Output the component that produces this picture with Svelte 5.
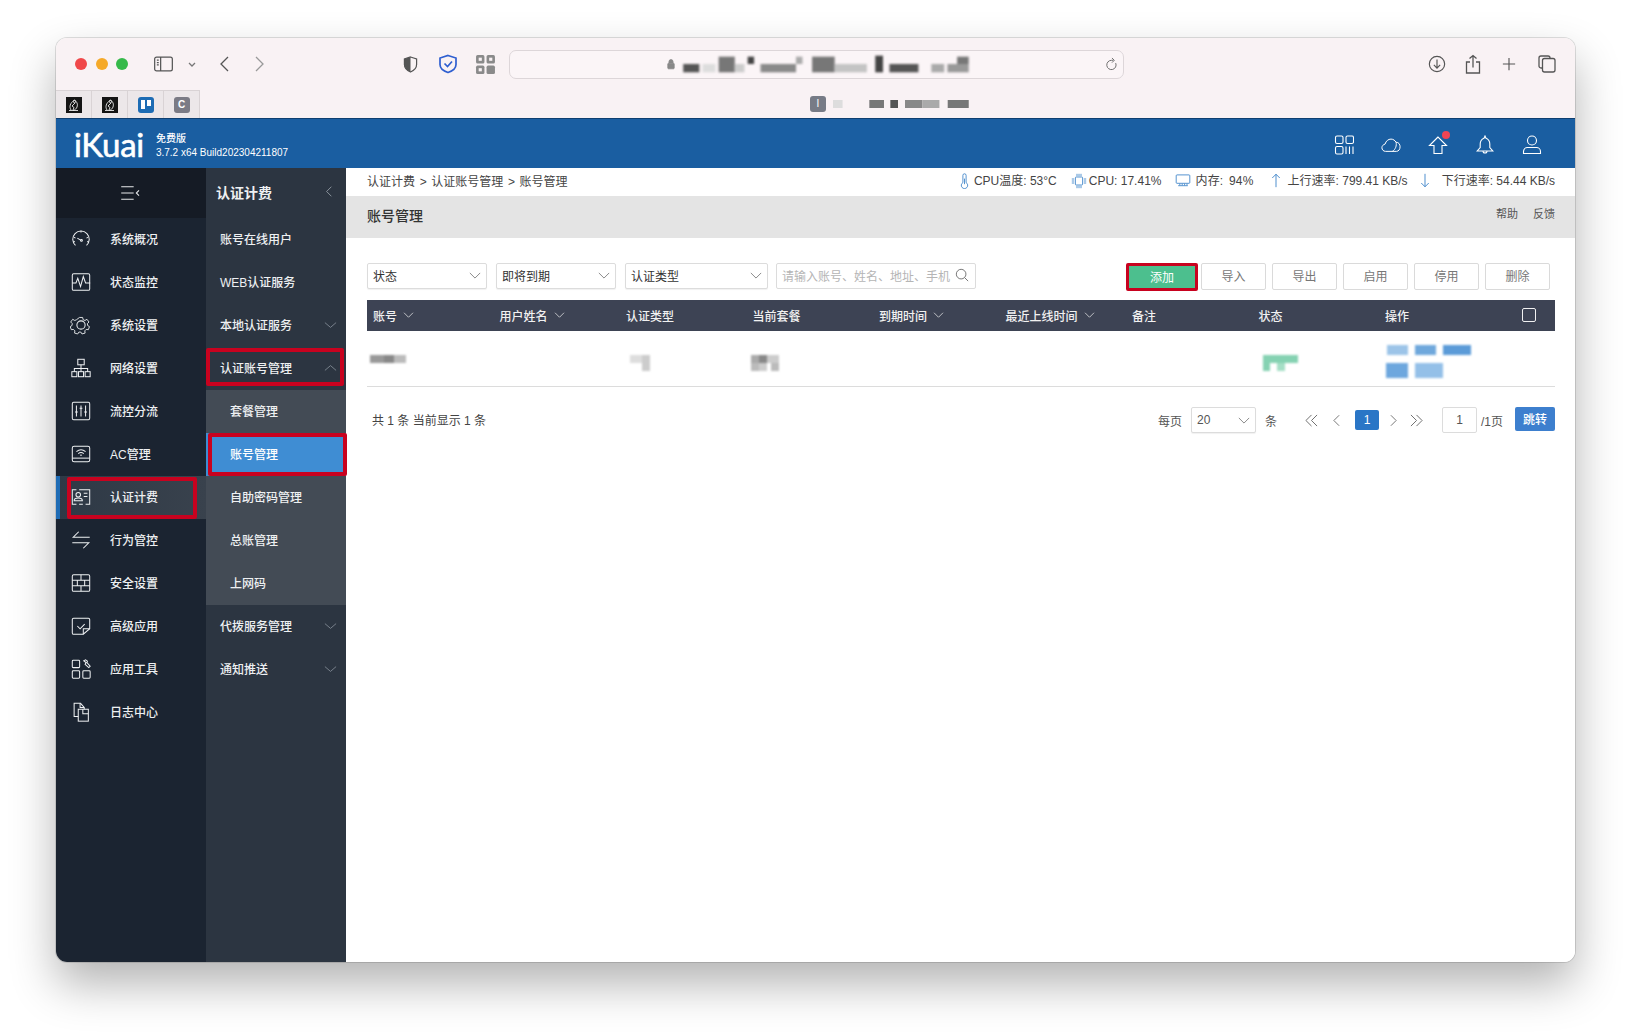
<script lang="ts">
	const icons: Record<string, string> = {
		gauge: '<path d="M6 19a9 9 0 1 1 12 0"/><path d="M12 3v2M4 10l2 1M20 10l-2 1M3.500 15h2M18.500 15h2"/><path d="M8 11l4 2.500"/><circle cx="12.500" cy="13.500" r="1"/>',
		pulse: '<rect x="2.500" y="3" width="19" height="18" rx="1.500"/><path d="M2.500 13h4l2-5 3 9 3-11 2.500 7h5"/>',
		gear: '<circle cx="12" cy="12" r="4.500"/><path d="M10 2.500h4l.6 2.800 2.300 1 2.500-1.500 2.600 3.400-2 2 .3 2.400 2.300 1.400-1.400 3.800-2.800-.3-1.700 1.800.4 2.800-3.900 1.100-1.500-2.400h-2.400l-1.500 2.400-3.900-1.100.4-2.800-1.700-1.800-2.800.3-1.400-3.800 2.300-1.400.3-2.400-2-2 2.600-3.400 2.500 1.500 2.300-1z" transform="translate(1.600 1.600) scale(.87)"/>',
		network: '<rect x="8.500" y="2.500" width="7" height="6"/><rect x="2" y="16" width="5.500" height="5.500"/><rect x="9.250" y="16" width="5.500" height="5.500"/><rect x="16.500" y="16" width="5.500" height="5.500"/><path d="M12 8.500V16M4.750 16v-3.500h14.500V16"/>',
		sliders: '<rect x="2.500" y="2.500" width="19" height="19" rx="1.500"/><path d="M7 6v12M12 6v12M17 6v12"/><path d="M5.500 13h3M10.500 9h3M15.500 13h3"/>',
		wifi: '<rect x="2.500" y="3.500" width="19" height="17" rx="2"/><path d="M2.500 16.500h19"/><path d="M7 9.500c3-2.500 7-2.500 10 0M9 11.500c2-1.500 4-1.500 6 0M11 13.500c.6-.5 1.400-.5 2 0"/>',
		card: '<path d="M7 4H2.500v16H7M10 20h4M17 20h4.500V4H10"/><circle cx="9" cy="9.500" r="2.500"/><path d="M4.500 16c0-2 2-3 4.500-3s4.500 1 4.500 3z"/><path d="M15 8h4M15 11.500h4"/>',
		swap: '<path d="M21.500 9H3.500l6-6"/><path d="M2.500 15h18l-6 6"/>',
		wall: '<rect x="2.500" y="3" width="19" height="18" rx="1.500"/><path d="M2.500 9h19M2.500 15h19M8 9v6M16 9v6M12 3v6M12 15v6"/>',
		check: '<path d="M14.500 21H4a1.500 1.500 0 0 1-1.500-1.500V5A1.500 1.500 0 0 1 4 3.500h16A1.500 1.500 0 0 1 21.500 5v10l-7 6z"/><path d="M14.500 21v-6h7M8 12l3 3 5-5"/>',
		tools: '<rect x="2.500" y="2.500" width="8" height="8" rx="1"/><rect x="2.500" y="14" width="8" height="8" rx="1"/><rect x="14" y="14" width="8" height="8" rx="1"/><path d="M15 3l2.500 2-1 2 4 3.500 1.500-1.500-3.500-4 .5-1.500-2-1.500z"/>',
		files: '<path d="M9 17H4.500V2.500h7l4 4.500V9"/><path d="M11 2.500V7h4.500"/><rect x="9" y="9" width="11" height="13"/><path d="M14 9v5h6"/>'
	};

	const mainMenu = [
		{ label: '系统概况', icon: 'gauge' },
		{ label: '状态监控', icon: 'pulse' },
		{ label: '系统设置', icon: 'gear' },
		{ label: '网络设置', icon: 'network' },
		{ label: '流控分流', icon: 'sliders' },
		{ label: 'AC管理', icon: 'wifi' },
		{ label: '认证计费', icon: 'card', active: true },
		{ label: '行为管控', icon: 'swap' },
		{ label: '安全设置', icon: 'wall' },
		{ label: '高级应用', icon: 'check' },
		{ label: '应用工具', icon: 'tools' },
		{ label: '日志中心', icon: 'files' }
	];

	const subTop = [
		{ label: '账号在线用户' },
		{ label: 'WEB认证服务' },
		{ label: '本地认证服务', arrow: true }
	];
	const subChildren = ['套餐管理', '账号管理', '自助密码管理', '总账管理', '上网码'];
	const subBottom = ['代拨服务管理', '通知推送'];

	const columns = [
		{ label: '账号', sort: true },
		{ label: '用户姓名', sort: true },
		{ label: '认证类型' },
		{ label: '当前套餐' },
		{ label: '到期时间', sort: true },
		{ label: '最近上线时间', sort: true },
		{ label: '备注' },
		{ label: '状态' },
		{ label: '操作' }
	];

	const actions = ['导入', '导出', '启用', '停用', '删除'];

	// blurred parts of the screenshot: x, y, w, h, colour
	const urlBlur = [
		[135, 130, 25, 25, '#555'], [165, 130, 20, 25, '#ddd'], [190, 108, 25, 47, '#777'],
		[215, 130, 15, 25, '#ccc'], [235, 108, 10, 22, '#444'], [255, 130, 55, 25, '#8a8a8a'],
		[310, 108, 10, 22, '#aaa'], [335, 108, 35, 47, '#777'], [370, 130, 50, 25, '#c4c4c4'],
		[433, 105, 12, 50, '#444'], [455, 130, 45, 25, '#555'], [520, 130, 20, 25, '#aaa'],
		[545, 130, 33, 25, '#999'], [560, 108, 18, 22, '#777']
	];
	const tabBlur = [
		[365, 245, 15, 25, '#ddd'], [422, 245, 23, 25, '#777'], [455, 245, 12, 25, '#555'],
		[478, 245, 27, 25, '#888'], [505, 245, 27, 25, '#aaa'], [545, 245, 33, 25, '#777']
	];
	const cellBlur = [
		{ w: 36, h: 9, rects: [[0, 0, 14, 8, '#999'], [14, 0, 10, 8, '#888'], [24, 0, 12, 8, '#bbb']] },
		null,
		{ w: 20, h: 16, rects: [[0, 0, 12, 8, '#ddd'], [12, 0, 8, 8, '#ccc'], [12, 8, 8, 8, '#ccc']] },
		{ w: 28, h: 16, rects: [[0, 0, 8, 8, '#aaa'], [8, 0, 8, 8, '#888'], [16, 0, 12, 8, '#ccc'], [0, 8, 8, 8, '#bbb'], [8, 8, 8, 8, '#ccc'], [20, 8, 8, 8, '#bbb']] },
		null,
		null,
		null,
		{ w: 35, h: 16, rects: [[0, 0, 35, 8, '#85d2b2'], [0, 8, 7, 8, '#85d2b2'], [14, 8, 8, 8, '#a5dfc6']] },
		{ w: 88, h: 33, rects: [[4, 0, 21, 10, '#9cc4e8'], [32, 0, 21, 10, '#6fa8dc'], [60, 0, 28, 10, '#5b9bd8'], [3, 18, 22, 15, '#6da7de'], [32, 18, 28, 15, '#94c0e8']] }
	];
</script>

{#snippet darkFavicon()}
	<svg class="fav-dark" viewBox="0 0 16 16">
		<rect width="16" height="16" fill="#141414" stroke="none"/>
		<path d="M5 13c-2-3-1-7 3-9.500M8 3c3 1.500 4 4 3 7-.5 1.500-2 3-4 3.500M9 6L6 9l2 1.500-1 2.500M3 13.500h9"/>
		<circle cx="8.500" cy="4.500" r="1.200"/>
	</svg>
{/snippet}

<div class="page">
	<div class="window">
		<div class="chrome">
			<div class="toolbar-row">
				<div class="lights"><i class="red"></i><i class="yellow"></i><i class="green"></i></div>
				<svg class="tb sidebar-btn" viewBox="0 0 20 16"><rect x=".7" y=".7" width="18.600" height="14.600" rx="2"/><path d="M7 .7v14.600"/><path d="M3 4h2M3 6.500h2M3 9h2" /></svg>
				<svg class="tb drop" viewBox="0 0 8 5"><path d="M1 1l3 3 3-3"/></svg>
				<svg class="tb back" viewBox="0 0 10 16"><path d="M9 1L2 8l7 7"/></svg>
				<svg class="tb forward" viewBox="0 0 10 16"><path d="M1 1l7 7-7 7"/></svg>
				<svg class="tb shield" viewBox="0 0 16 18"><path d="M8 1l6.500 2v6c0 4-3 6.500-6.500 8-3.500-1.500-6.500-4-6.500-8V3z"/><path class="fill" d="M8 1v16c-3.500-1.500-6.500-4-6.500-8V3z"/></svg>
				<svg class="tb bitwarden" viewBox="0 0 20 20"><path d="M10 1.500l8 2.500v6.500c0 4-3.500 6.500-8 8-4.500-1.500-8-4-8-8V4z"/><path d="M6.500 9.500l3 3 4.500-5"/></svg>
				<svg class="tb qr" viewBox="0 0 20 20"><rect x="1" y="1" width="8" height="8" rx="1.500"/><rect x="11" y="1" width="8" height="8" rx="1.500"/><rect x="1" y="11" width="8" height="8" rx="1.500"/><rect x="11" y="11" width="8" height="8" rx="1.500"/><rect class="hole" x="3.500" y="3.500" width="3" height="3"/><rect class="hole" x="13.500" y="3.500" width="3" height="3"/><rect class="hole" x="3.500" y="13.500" width="3" height="3"/></svg>
				<div class="urlbar">
					<svg class="lock" viewBox="0 0 10 14"><path d="M2.500 6V4a2.500 2.500 0 0 1 5 0v2"/><rect x="1" y="6" width="8" height="7" rx="1"/></svg>
					<svg class="url-blur" viewBox="130 100 450 60" preserveAspectRatio="none">
						{#each urlBlur as r}<rect x={r[0]} y={r[1]} width={r[2]} height={r[3]} fill={r[4]}/>{/each}
					</svg>
					<svg class="reload" viewBox="0 0 14 16"><path d="M11.500 6.500A5 5 0 1 1 7 3.500h2"/><path d="M7.500 1l2.500 2.500L7.500 6"/></svg>
				</div>
				<svg class="tb download" viewBox="0 0 20 20"><circle cx="10" cy="10" r="8.500"/><path d="M10 5v9.500M6.500 11l3.500 3.500 3.500-3.500"/></svg>
				<svg class="tb share" viewBox="0 0 16 20"><path d="M5 7.500H1.500v11h13v-11H11"/><path d="M8 13V1M4.500 4L8 1l3.500 3"/></svg>
				<svg class="tb plus" viewBox="0 0 16 16"><path d="M8 1v14M1 8h14"/></svg>
				<svg class="tb copy" viewBox="0 0 18 18"><rect x="4.500" y="3.500" width="12.500" height="13.500" rx="2"/><path d="M4 13H3a2 2 0 0 1-2-2V3a2 2 0 0 1 2-2h7a2 2 0 0 1 2 2v.5"/></svg>
			</div>
			<div class="tabs-row">
				<div class="fav">{@render darkFavicon()}</div>
				<div class="fav">{@render darkFavicon()}</div>
				<div class="fav"><span class="trello"><i></i><i></i></span></div>
				<div class="fav"><span class="grey-c">C</span></div>
				<div class="tab-title">
					<span class="tab-badge">I</span>
					<svg class="tab-blur" viewBox="365 245 215 25" preserveAspectRatio="none">
						{#each tabBlur as r}<rect x={r[0]} y={r[1]} width={r[2]} height={r[3]} fill={r[4]}/>{/each}
					</svg>
				</div>
			</div>
		</div>

		<header class="topbar">
			<div class="logo">iKuai</div>
			<div class="version">
				<div>免费版</div>
				<div>3.7.2 x64 Build202304211807</div>
			</div>
			<div class="top-icons">
				<svg viewBox="0 0 20 20"><rect x="1.500" y="1" width="7.500" height="7.500" rx="1.500"/><rect x="12" y="1" width="7.500" height="7.500" rx="1.500"/><rect x="1.500" y="11.500" width="7.500" height="7.500" rx="1.500"/><path d="M12 11.500V19M15.500 11.500V19M19 11.500V19"/></svg>
				<svg viewBox="0 0 22 16"><path d="M5 15C2.500 15 1 13 1 11s1.500-3.500 3.500-4C5.500 3.500 8 1.500 11 1.500c2.500 0 4.500 1.500 5.500 3.500 3-.3 4.500 2.500 4.500 5 0 2.500-1.500 5-4 5z"/><path d="M16.500 5c1 3.500-.5 8-4 10"/></svg>
				<span class="home">
					<svg viewBox="0 0 20 20"><path d="M10 2L1.500 10.500H6v8h8v-8h4.500z"/></svg>
					<i class="dot"></i>
				</span>
				<svg viewBox="0 0 20 20"><path d="M10 1l1 2.200c2.500 1 3.800 3 3.800 5.800v3.500l3 3.500H2.200l3-3.500V9c0-2.800 1.300-4.800 3.800-5.800z"/><path d="M8 16a2 2 0 0 0 4 0"/></svg>
				<svg viewBox="0 0 20 20"><circle cx="10" cy="5.500" r="4.500"/><path d="M1.500 18.500v-2c0-2.500 2-4 4-4h9c2 0 4 1.500 4 4v2z"/></svg>
			</div>
		</header>

		<div class="body">
			<nav class="main-nav">
				<div class="main-head">
					<svg viewBox="0 0 24 18"><path d="M1 2h14M1 9h14M1 16h14M21 6l-3 3 3 3"/></svg>
				</div>
				{#each mainMenu as item}
					<div class="main-item" class:active={item.active}>
						<svg class="nav-icon" viewBox="0 0 24 24">{@html icons[item.icon]}</svg>
						<span>{item.label}</span>
						{#if item.active}<i class="mark mark-main"></i>{/if}
					</div>
				{/each}
			</nav>

			<nav class="sub-nav">
				<div class="sub-head">
					<span>认证计费</span>
					<svg class="chev" viewBox="0 0 10 16"><path d="M8 2L2 8l6 6"/></svg>
				</div>
				{#each subTop as item}
					<div class="sub-item">
						<span>{item.label}</span>
						{#if item.arrow}<svg class="chev-wide" viewBox="0 0 16 10"><path d="M1 2l7 6 7-6"/></svg>{/if}
					</div>
				{/each}
				<div class="sub-item open">
					<span>认证账号管理</span>
					<svg class="chev-wide" viewBox="0 0 16 10"><path d="M1 8l7-6 7 6"/></svg>
					<i class="mark mark-open"></i>
				</div>
				<div class="sub-children">
					{#each subChildren as child, i}
						<div class="sub-child" class:current={i === 1}>
							<span>{child}</span>
							{#if i === 1}<i class="mark mark-current"></i>{/if}
						</div>
					{/each}
				</div>
				{#each subBottom as label}
					<div class="sub-item">
						<span>{label}</span>
						<svg class="chev-wide" viewBox="0 0 16 10"><path d="M1 2l7 6 7-6"/></svg>
					</div>
				{/each}
			</nav>

			<main class="content">
				<div class="crumbs">
					<span class="trail">认证计费 &gt; 认证账号管理 &gt; 账号管理</span>
					<div class="stats">
						<span class="stat">
							<svg class="st thermo" viewBox="0 0 10 20"><path d="M3 12V3a2 2 0 0 1 4 0v9a4 4 0 1 1-4 0z"/><path d="M5 7v7"/></svg>CPU温度: 53°C
						</span>
						<span class="stat">
							<svg class="st chip" viewBox="0 0 20 20"><rect x="5.500" y="5" width="9" height="10" rx="1"/><path d="M1 7.500h3M1 10h3M1 12.500h3M16 7.500h3M16 10h3M16 12.500h3M7.500 1v3M10 1v3M12.500 1v3M7.500 16v3M10 16v3M12.500 16v3"/></svg>CPU: 17.41%
						</span>
						<span class="stat mem">
							<svg class="st monitor" viewBox="0 0 20 16"><rect x="1.500" y="1" width="17" height="10.500" rx="1"/><path d="M4 14.500h12M6 12v2M9 12v2M12 12v2M15 12v2"/></svg>内存: 94%
						</span>
						<span class="stat">
							<svg class="st arrow up" viewBox="0 0 12 18"><path d="M6 17V1.500M1.500 6L6 1.500 10.500 6"/></svg>上行速率: 799.41 KB/s
						</span>
						<span class="stat">
							<svg class="st arrow dn" viewBox="0 0 12 18"><path d="M6 1v15.500M1.500 12L6 16.500 10.500 12"/></svg><span class="down">下行速率: 54.44 KB/s</span>
						</span>
					</div>
				</div>

				<div class="title-bar">
					<h1>账号管理</h1>
					<div class="title-links"><span>帮助</span><span>反馈</span></div>
				</div>

				<div class="panel">
					<div class="filters">
						<div class="select s1">状态<svg viewBox="0 0 14 8"><path d="M1 1l6 6 6-6"/></svg></div>
						<div class="select s2">即将到期<svg viewBox="0 0 14 8"><path d="M1 1l6 6 6-6"/></svg></div>
						<div class="select s3">认证类型<svg viewBox="0 0 14 8"><path d="M1 1l6 6 6-6"/></svg></div>
						<div class="search">
							<span>请输入账号、姓名、地址、手机</span>
							<svg viewBox="0 0 16 16"><circle cx="7" cy="7" r="5.500"/><path d="M11 11l4 4"/></svg>
						</div>
						<div class="buttons">
							<button class="add">添加</button>
							{#each actions as a}<button>{a}</button>{/each}
						</div>
					</div>

					<div class="table-head">
						{#each columns as col}
							<div class="th">
								{col.label}
								{#if col.sort}<svg viewBox="0 0 14 8"><path d="M1 1l6 6 6-6"/></svg>{/if}
							</div>
						{/each}
						<div class="th-check"><i></i></div>
					</div>

					<div class="table-row">
						{#each cellBlur as cell}
							<div class="td">
								{#if cell}
									<svg class="cell-blur" width={cell.w} height={cell.h} viewBox={`0 0 ${cell.w} ${cell.h}`}>
										{#each cell.rects as r}<rect x={r[0]} y={r[1]} width={r[2]} height={r[3]} fill={r[4]}/>{/each}
									</svg>
								{/if}
							</div>
						{/each}
					</div>

					<div class="pager">
						<span class="total">共 1 条 当前显示 1 条</span>
						<div class="pages">
							<span>每页</span>
							<div class="select per">20<svg viewBox="0 0 14 8"><path d="M1 1l6 6 6-6"/></svg></div>
							<span>条</span>
							<svg class="pg first" viewBox="0 0 14 14"><path d="M7 1L1 7l6 6M13 1L7 7l6 6"/></svg>
							<svg class="pg prev" viewBox="0 0 8 14"><path d="M7 1L1 7l6 6"/></svg>
							<span class="num">1</span>
							<svg class="pg next" viewBox="0 0 8 14"><path d="M1 1l6 6-6 6"/></svg>
							<svg class="pg last" viewBox="0 0 14 14"><path d="M1 1l6 6-6 6M7 1l6 6-6 6"/></svg>
							<span class="jump-input">1</span>
							<span class="of">/1页</span>
							<button class="jump">跳转</button>
						</div>
					</div>
				</div>
			</main>
		</div>
	</div>
</div>

<style>
	:global(body) {
		background: #fff;
		overflow: hidden;
	}

	.page {
		box-sizing: border-box;
		height: 1036px;
		padding: 38px 56px 0;
		font-family: "Liberation Sans", "Noto Sans CJK SC", sans-serif;
		font-size: 12px;
		color: #333;
	}

	.window {
		display: flex;
		flex-direction: column;
		height: 924px;
		border-radius: 11px;
		overflow: hidden;
		background: #fff;
		box-shadow: 0 0 0 1px rgba(0, 0, 0, 0.12), 0 22px 46px rgba(0, 0, 0, 0.3);
	}

	/* browser */
	.chrome {
		height: 80px;
		flex: none;
		background: #f9f2f4;
	}

	.toolbar-row {
		display: flex;
		align-items: center;
		height: 52px;
		padding-left: 19px;
	}

	.lights {
		display: flex;
		gap: 8.5px;
	}

	.lights i {
		width: 12px;
		height: 12px;
		border-radius: 50%;
	}

	.red { background: #f0484a; }
	.yellow { background: #f5a929; }
	.green { background: #36b94a; }

	.tb {
		flex: none;
		fill: none;
		stroke: #555;
		stroke-width: 1.3;
	}

	.sidebar-btn { width: 19px; height: 16px; margin-left: 26px; }
	.drop { width: 8px; height: 5px; margin-left: 15px; stroke: #777; }
	.back { width: 10px; height: 16px; margin-left: 23px; }
	.forward { width: 10px; height: 16px; margin-left: 26px; stroke: #999; }
	.shield { width: 15px; height: 17px; margin-left: 138px; }
	.shield .fill { fill: #555; stroke: none; }
	.bitwarden { width: 20px; height: 20px; margin-left: 20px; stroke: #2f5fd0; stroke-width: 1.7; }
	.qr { width: 21px; height: 21px; margin-left: 17px; fill: #8a8a8a; stroke: none; }
	.qr .hole { fill: #f9f2f4; }

	.urlbar {
		position: relative;
		display: flex;
		align-items: center;
		box-sizing: border-box;
		width: 615px;
		height: 29px;
		margin-left: 13px;
		padding-left: 157px;
		background: #fbf5f7;
		border: 1px solid #ddd6d9;
		border-radius: 7px;
	}

	.lock {
		width: 8px;
		height: 12px;
		fill: #888;
		stroke: #888;
	}

	.url-blur {
		width: 290px;
		height: 20px;
		margin-left: 5px;
		filter: blur(0.8px);
	}

	.reload {
		width: 13px;
		height: 15px;
		margin-left: 135px;
		fill: none;
		stroke: #666;
	}

	.download { width: 18px; height: 18px; margin-left: 304px; }
	.share { width: 16px; height: 21px; margin-left: 19px; }
	.plus { width: 14px; height: 14px; margin-left: 21px; }
	.copy { width: 18px; height: 18px; margin-left: 22px; }

	.tabs-row {
		display: flex;
		height: 28px;
	}

	.fav {
		display: flex;
		align-items: center;
		justify-content: center;
		box-sizing: border-box;
		width: 36px;
		background: #ece7e9;
		border: 1px solid #d9d3d5;
		border-left: 0;
		border-bottom: 0;
	}

	.fav-dark {
		width: 16px;
		height: 16px;
		fill: none;
		stroke: #e8e8e8;
		stroke-width: 0.9;
	}

	.trello {
		display: flex;
		gap: 2px;
		align-items: flex-start;
		box-sizing: border-box;
		width: 16px;
		height: 16px;
		padding: 3px;
		background: #1d6cb4;
		border-radius: 3px;
	}

	.trello i {
		width: 4px;
		height: 9px;
		background: #fff;
	}

	.trello i + i {
		height: 6px;
	}

	.grey-c {
		width: 16px;
		height: 16px;
		background: #7b7b85;
		border-radius: 3px;
		color: #fff;
		font-size: 10px;
		font-weight: 700;
		line-height: 16px;
		text-align: center;
	}

	.tab-title {
		display: flex;
		align-items: center;
		margin-left: 610px;
	}

	.tab-badge {
		width: 16px;
		height: 16px;
		background: #777b86;
		border-radius: 3px;
		color: #fff;
		font-size: 10px;
		line-height: 16px;
		text-align: center;
	}

	.tab-blur {
		width: 137px;
		height: 8px;
		margin-left: 7px;
		filter: blur(0.6px);
	}

	/* ikuai top bar */
	.topbar {
		display: flex;
		align-items: center;
		flex: none;
		box-sizing: border-box;
		height: 50px;
		padding-left: 18px;
		background: #1a5ea1;
		border-top: 1px solid #0f3f70;
		color: #fff;
	}

	.logo {
		font-family: "Lato", "Liberation Sans", sans-serif;
		font-size: 33px;
		line-height: 36px;
		letter-spacing: -0.3px;
		-webkit-text-stroke: 0.6px #fff;
	}

	.version {
		margin: 4px 0 0 12px;
		font-size: 10px;
		line-height: 14px;
		font-weight: 500;
	}

	.top-icons {
		display: flex;
		align-items: center;
		gap: 27px;
		margin-left: auto;
		padding: 3px 33px 0 0;
	}

	.top-icons svg {
		display: block;
		width: 20px;
		height: 20px;
		fill: none;
		stroke: #fff;
		stroke-width: 1.1;
	}

	.home {
		position: relative;
	}

	.dot {
		position: absolute;
		top: -4px;
		right: -2px;
		width: 8px;
		height: 8px;
		background: #ee4455;
		border-radius: 50%;
	}

	/* left menus */
	.body {
		display: flex;
		flex: 1;
		min-height: 0;
	}

	.main-nav {
		flex: none;
		width: 150px;
		background: #1b2431;
		color: #eef0f2;
		font-weight: 500;
	}

	.main-head {
		display: flex;
		align-items: center;
		justify-content: center;
		height: 50px;
		background: #151b25;
	}

	.main-head svg {
		width: 22px;
		height: 16px;
		fill: none;
		stroke: #e8eaec;
		stroke-width: 1.2;
	}

	.main-item {
		position: relative;
		display: flex;
		align-items: center;
		gap: 20px;
		box-sizing: border-box;
		height: 43px;
		padding: 0 0 2px 14px;
	}

	.main-item.active {
		background: linear-gradient(90deg, #2e3946, #39424d);
		border-left: 4px solid #1f6cb5;
		padding-left: 10px;
	}

	.nav-icon {
		width: 22px;
		height: 22px;
		margin-right: -2px;
		fill: none;
		stroke: #f0f2f4;
		stroke-width: 1.1;
	}

	.mark {
		position: absolute;
		box-sizing: border-box;
		border: 4px solid #c8021f;
		border-radius: 2px;
		pointer-events: none;
	}

	.mark-main { left: 7px; right: 9px; top: 1px; bottom: 0; }
	.mark-open { left: 0; right: 2px; top: 1px; bottom: 4px; }
	.mark-current { left: 2px; right: -1px; top: 0; bottom: 0; }

	.sub-nav {
		flex: none;
		width: 140px;
		background: #2c3541;
		color: #eef0f2;
		font-weight: 500;
	}

	.sub-head {
		display: flex;
		align-items: center;
		justify-content: space-between;
		height: 50px;
		padding: 0 13px 3px 10px;
		box-sizing: border-box;
		font-size: 14px;
		font-weight: 700;
	}

	.chev {
		width: 8px;
		height: 13px;
		fill: none;
		stroke: #a2a9b2;
	}

	.chev-wide {
		position: absolute;
		right: 9px;
		top: 17px;
		width: 13px;
		height: 8px;
		fill: none;
		stroke: #8a939d;
	}

	.sub-item {
		position: relative;
		display: flex;
		align-items: center;
		box-sizing: border-box;
		height: 43px;
		padding: 0 0 2px 14px;
	}

	.sub-children {
		background: #434b55;
	}

	.sub-child {
		position: relative;
		display: flex;
		align-items: center;
		box-sizing: border-box;
		height: 43px;
		padding: 0 0 2px 24px;
	}

	.sub-child.current {
		background: #3f8dd3;
		color: #fff;
	}

	/* page */
	.content {
		flex: 1;
		min-width: 0;
		background: #fff;
	}

	.crumbs {
		display: flex;
		align-items: center;
		justify-content: space-between;
		box-sizing: border-box;
		height: 28px;
		padding: 0 20px 3px 21px;
		color: #444;
	}

	.trail {
		word-spacing: 1.3px;
	}

	.stats {
		display: flex;
		align-items: center;
		gap: 14px;
	}

	.stat {
		display: flex;
		align-items: center;
		line-height: 16px;
	}

	.mem {
		word-spacing: 2px;
		letter-spacing: 0.2px;
	}

	.st {
		flex: none;
		fill: none;
		stroke: #2c78c4;
		stroke-width: 1;
	}

	.thermo { width: 9px; height: 16px; margin-right: 5px; }
	.chip { width: 16px; height: 16px; margin-right: 2px; }
	.monitor { width: 16px; height: 13px; margin-right: 4px; }
	.arrow { width: 10px; height: 15px; }
	.arrow.up { margin: 0 7px 0 3px; }
	.arrow.dn { margin: 0 7px 0 -2px; }
	.down { margin-left: 5px; }

	.title-bar {
		display: flex;
		justify-content: space-between;
		box-sizing: border-box;
		height: 42px;
		padding: 10px 20px 0 21px;
		background: #e4e4e4;
	}

	h1 {
		margin: 0;
		font-size: 14px;
		font-weight: 500;
		line-height: 20px;
		color: #333;
	}

	.title-links {
		display: flex;
		gap: 15px;
		font-size: 11px;
		line-height: 16px;
		color: #555;
	}

	.panel {
		padding: 25px 20px 0 21px;
	}

	.filters {
		display: flex;
		align-items: flex-start;
		height: 37px;
	}

	.select {
		display: flex;
		align-items: center;
		justify-content: space-between;
		box-sizing: border-box;
		height: 26px;
		padding: 0 5px 2px 5px;
		background: #fff;
		border: 1px solid #dcdcdc;
		border-radius: 2px;
		box-shadow: 0 1px 1px rgba(0, 0, 0, 0.06);
	}

	.select svg {
		width: 12px;
		height: 7px;
		fill: none;
		stroke: #777;
	}

	.s1 { width: 120px; }
	.s2 { width: 120px; margin-left: 9px; }
	.s3 { width: 143px; margin-left: 9px; }

	.search {
		display: flex;
		align-items: center;
		justify-content: space-between;
		box-sizing: border-box;
		width: 200px;
		height: 26px;
		margin-left: 8px;
		padding: 0 6px 2px 5px;
		border: 1px solid #dcdcdc;
		border-radius: 2px;
		color: #b5b5b5;
		white-space: nowrap;
	}

	.search svg {
		flex: none;
		width: 14px;
		height: 14px;
		fill: none;
		stroke: #666;
	}

	.buttons {
		display: flex;
		gap: 6px;
		margin-left: auto;
		padding-right: 5px;
	}

	button {
		box-sizing: border-box;
		width: 65px;
		height: 27px;
		padding: 0 0 2px;
		background: #fff;
		border: 1px solid #dadada;
		border-radius: 2px;
		color: #777;
		font: inherit;
	}

	.add {
		width: 72px;
		height: 28px;
		margin-right: -3px;
		background: #4cbf8e;
		border: 3px solid #c8021f;
		color: #fff;
	}

	.table-head {
		display: grid;
		grid-template-columns: repeat(9, 126.5px) 1fr;
		align-items: center;
		box-sizing: border-box;
		height: 31px;
		padding-bottom: 1px;
		background: #3d4354;
		color: #f1f1f1;
		font-weight: 500;
	}

	.th {
		display: flex;
		align-items: center;
		gap: 6px;
		padding-left: 6px;
	}

	.th svg {
		width: 11px;
		height: 6px;
		fill: none;
		stroke: #e8e8e8;
	}

	.th-check i {
		display: block;
		box-sizing: border-box;
		width: 14px;
		height: 14px;
		margin-left: 16px;
		border: 1px solid #f1f1f1;
		border-radius: 2px;
	}

	.table-row {
		display: grid;
		grid-template-columns: repeat(9, 126.5px) 1fr;
		box-sizing: border-box;
		height: 56px;
		border-bottom: 1px solid #dcdcdc;
	}

	.td {
		padding: 24px 0 0 3px;
	}

	.td:nth-child(3) { padding-left: 10px; }
	.td:nth-child(4) { padding-left: 4px; }
	.td:nth-child(8) { padding-left: 10px; }
	.td:nth-child(9) { padding: 14px 0 0 4px; }

	.cell-blur {
		display: block;
		filter: blur(1px);
	}

	.pager {
		display: flex;
		align-items: center;
		justify-content: space-between;
		height: 46px;
		margin-top: 10px;
	}

	.total {
		padding: 0 0 1px 5px;
		color: #444;
	}

	.pages {
		display: flex;
		align-items: center;
		color: #555;
	}

	.per {
		width: 65px;
		margin: 0 9px 0 9px;
		padding-bottom: 0;
	}

	.pg {
		flex: none;
		height: 13px;
		fill: none;
		stroke: #666;
	}

	.first { width: 13px; margin-left: 28px; }
	.prev { width: 7px; margin-left: 15px; }
	.num {
		width: 24px;
		height: 20px;
		margin-left: 15px;
		background: #2a76c6;
		border-radius: 2px;
		color: #fff;
		line-height: 20px;
		text-align: center;
	}
	.next { width: 7px; margin-left: 11px; }
	.last { width: 13px; margin-left: 13px; }

	.jump-input {
		box-sizing: border-box;
		width: 35px;
		height: 26px;
		margin-left: 19px;
		border: 1px solid #dcdcdc;
		border-radius: 2px;
		line-height: 24px;
		text-align: center;
	}

	.of {
		margin-left: 4px;
	}

	.jump {
		width: 40px;
		height: 24px;
		margin-left: 12px;
		margin-top: -2px;
		background: #3d7fce;
		border: 0;
		color: #fff;
		font-weight: 500;
	}
</style>
